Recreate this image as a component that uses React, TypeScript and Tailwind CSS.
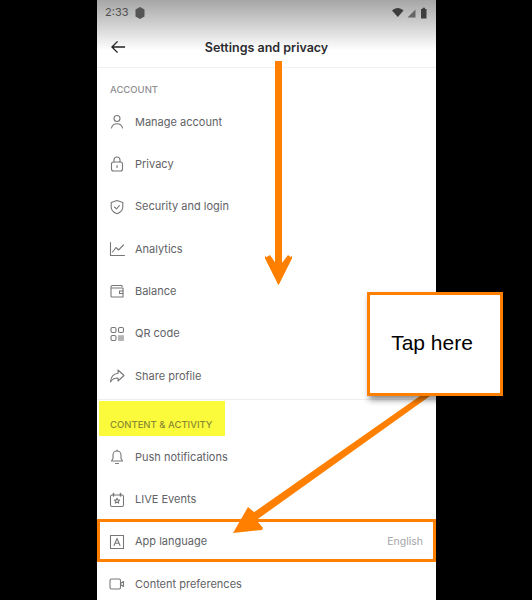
import React from 'react';

const ic = { fill: 'none', stroke: '#777777', strokeWidth: 1.1, strokeLinecap: 'round' as const, strokeLinejoin: 'round' as const };

function Icon({ children }: { children: React.ReactNode }) {
  return (
    <svg width="16" height="16" viewBox="0 0 16 16" className="shrink-0" {...ic}>
      {children}
    </svg>
  );
}

const icons: Record<string, React.ReactNode> = {
  user: (
    <Icon>
      <circle cx="8" cy="4.500" r="3" />
      <path d="M2.500 14c.6-3 2.700-4.300 5.500-4.300s4.900 1.300 5.500 4.300" />
    </Icon>
  ),
  lock: (
    <Icon>
      <rect x="2.500" y="6" width="11" height="9" rx="2" />
      <path d="M5 6V4a3 3 0 0 1 6 0v2M8 9.500v2" />
    </Icon>
  ),
  shield: (
    <Icon>
      <path d="M8 1.500l5.800 2v4.500c0 3.200-2.500 5.500-5.800 6.800-3.300-1.300-5.800-3.600-5.800-6.800V3.500z" />
      <path d="M5.500 8l2 1.800 3-3.300" />
    </Icon>
  ),
  chart: (
    <Icon>
      <path d="M1.500 1.500v13h14" />
      <path d="M3.500 11l3.500-4.500 2.500 2.500 5-5" />
    </Icon>
  ),
  wallet: (
    <Icon>
      <path d="M13 3.500V2.500H3.500A1.500 1.500 0 0 0 2 4v9a1 1 0 0 0 1 1h11V5H3" />
      <path d="M14 8h-3.500v2.500H14" />
    </Icon>
  ),
  qr: (
    <Icon>
      <rect x="2" y="1.500" width="5" height="5" rx="1.500" />
      <rect x="9.500" y="1.500" width="5" height="5" rx="1.500" />
      <rect x="2" y="9.500" width="5" height="5" rx="1.500" />
      <path d="M10 9.500v5M12 9.500v5M14 9.500v5" />
    </Icon>
  ),
  share: (
    <Icon>
      <path d="M9 2l6 5.500-6 5.500V10C5.500 10 3 11 1.500 14 1.800 9.500 4.500 5.800 9 5.300z" />
    </Icon>
  ),
  bell: (
    <Icon>
      <path d="M8 2a4 4 0 0 0-4 4v3.500L2.500 12h11L12 9.500V6a4 4 0 0 0-4-4z" />
      <path d="M8 1v1M6.500 14.500h3" />
    </Icon>
  ),
  live: (
    <Icon>
      <rect x="1.500" y="3" width="13" height="11.500" rx="1.500" />
      <path d="M4.500 1.500V4M11.500 1.500V4" strokeWidth="1.600" />
      <path d="M8 6.200l.8 1.700 1.800.2-1.300 1.200.4 1.800L8 10.200l-1.700.9.400-1.800-1.300-1.200 1.800-.2z" />
    </Icon>
  ),
  lang: (
    <Icon>
      <rect x="1.500" y="1.500" width="13" height="13" />
      <path d="M5 11.500L8 4.500l3 7M6 9.300h4" />
    </Icon>
  ),
  video: (
    <Icon>
      <rect x="1" y="3" width="10.500" height="10" rx="1.500" />
      <path d="M11.500 7.500l3-2v5l-3-2" />
    </Icon>
  ),
};

function Row({ icon, label, value }: { icon: string; label: string; value?: string }) {
  return (
    <div className="flex h-[42.3px] items-center pl-[12px] pr-[13px] text-[11px] text-[#626266]">
      <span className="w-[26px]">{icons[icon]}</span>
      <span className="flex-1">{label}</span>
      {value && <span className="text-[10.500px] text-[#a5a5a8]">{value}</span>}
    </div>
  );
}

export default function App() {
  return (
    <div className="relative h-[600px] w-[532px] overflow-hidden bg-black font-['Inter',sans-serif]">
      <div className="ml-[97px] h-[600px] w-[339px] bg-white">
        <div className="h-[68px] border-b border-[#f1f1f1] bg-gradient-to-b from-[#a6a6a6] to-white to-[75%]">
          <div className="flex h-[25px] items-center px-[8px] text-[11px] text-[#4f4f4f]">
            <span>2:33</span>
            <svg width="10" height="12" viewBox="0 0 10 12" className="ml-[7px]" fill="#555">
              <path d="M5 0l4.500 2.500v7L5 12 .5 9.500v-7z" />
            </svg>
            <span className="flex-1" />
            <svg width="36" height="12" viewBox="0 0 36 12" fill="#3d3d3d">
              <path d="M0 3.500C3.500 0 8 0 11.500 3.500L5.800 10z" />
              <path d="M15.500 10.500l8-8v8z" fill="#666" />
              <path d="M29 2h1.500V.8h2.500V2h1.500v9.500H29z" />
            </svg>
          </div>
          <div className="relative flex h-[42px] items-center justify-center pt-[4px] text-[12.500px] font-semibold text-[#2c2c30]">
            <svg width="15" height="14" viewBox="0 0 16 14" className="absolute left-[14px] top-[15px]" fill="none" stroke="#222" strokeWidth="1.500">
              <path d="M15 7H1M7 1L1 7l6 6" />
            </svg>
            Settings and privacy
          </div>
        </div>
        <div className="flex h-[33px] items-center pl-[13px] pt-[11px] text-[9.500px] font-medium text-[#8f8f92]">ACCOUNT</div>
        <Row icon="user" label="Manage account" />
        <Row icon="lock" label="Privacy" />
        <Row icon="shield" label="Security and login" />
        <Row icon="chart" label="Analytics" />
        <Row icon="wallet" label="Balance" />
        <Row icon="qr" label="QR code" />
        <Row icon="share" label="Share profile" />
        <div className="mt-[2px] border-t border-[#eeeeee] pt-[1px]">
          <div className="ml-[2px] flex h-[35px] w-[126px] items-end bg-[#fbfb3c] pb-[4px] pl-[11px] text-[9.500px] font-medium text-[#8a8a32]">
            CONTENT &amp; ACTIVITY
          </div>
        </div>
        <Row icon="bell" label="Push notifications" />
        <Row icon="live" label="LIVE Events" />
        <div className="-mt-[2px] flex h-[43px] items-center border-[3px] border-[#ff8000] pt-[3px]">
          <div className="-mx-[3px] flex-1">
            <Row icon="lang" label="App language" value="English" />
          </div>
        </div>
        <div className="mt-[1px]">
          <Row icon="video" label="Content preferences" />
        </div>
      </div>

      <svg width="532" height="600" viewBox="0 0 532 600" className="pointer-events-none absolute left-0 top-0" fill="#ff8000">
        <path d="M275 61h7v202l10-7 0 2-13.500 27L265 258l0-2 10 7z" />
        <path d="M265 258l5-3 5.500 8h6.500l6-8 4 3-13.500 27z" />
        <path d="M420 396h10L255 521l-5-6z" />
        <path d="M233 533l15-26 6 5-2 5 6 5 5 6-1 2z" />
      </svg>

      <div className="absolute left-[367px] top-[292px] flex h-[104px] w-[136px] items-center justify-center border-[3px] border-[#ff8000] bg-white pb-[2px] pr-[6px] font-['Liberation_Sans',sans-serif] text-[21px] text-black shadow-[2px_4px_6px_rgba(0,0,0,0.45)]">
        Tap here
      </div>
    </div>
  );
}
